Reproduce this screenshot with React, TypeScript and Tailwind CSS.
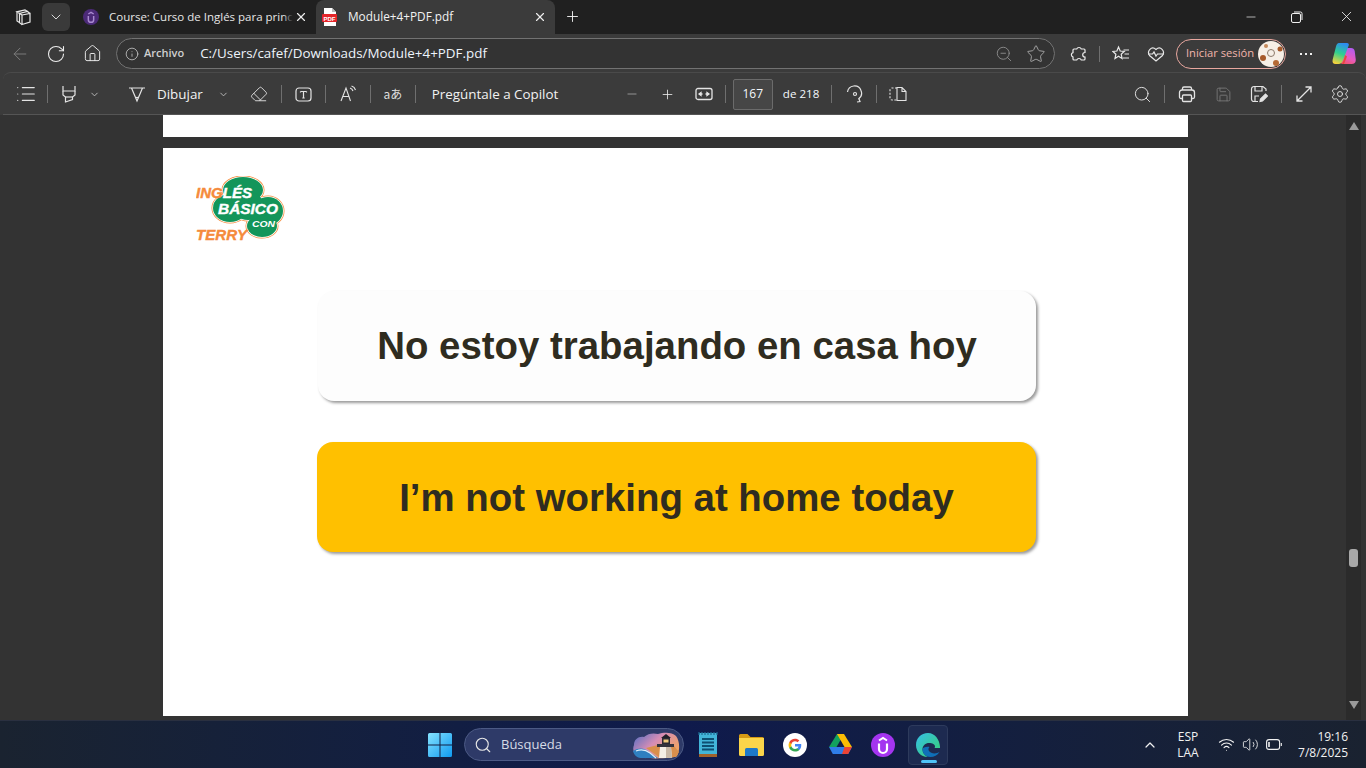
import { ChevronDown, ChevronUp, Minus, Plus, RotateCw, Home, Info, ZoomOut, Star, Search, Save, Settings, X, Eraser, List, ArrowLeft, Wifi, Volume2 } from 'lucide-react';
import type { ReactNode } from 'react';

const Sep = ({ cls = '' }: { cls?: string }) => <div className={`h-[18px] w-px shrink-0 bg-[#6f6f6f] ${cls}`} />;

const Slot = ({ w, children }: { w: string; children: ReactNode }) => (
  <div className={`flex shrink-0 items-center justify-center ${w}`}>{children}</div>
);

function TabsIcon() {
  return (
    <svg width="18" height="18" viewBox="0 0 18 18" fill="none" stroke="#e8e8e8" strokeWidth="1.200">
      <path d="M8 7l8-1.500V14l-8 2.500z" />
      <path d="M8 7L5.500 5.500l8-2L16 5.500" />
      <path d="M8 16.500l-2.500-1.700V5.500" />
      <path d="M5.500 5L3 3.800l8-2 2.500 1.700" />
      <path d="M5.500 14.500L3 13V3.800" />
    </svg>
  );
}

function PdfIcon() {
  return (
    <svg width="16" height="18" viewBox="0 0 16 18">
      <path d="M2 0h8l4 4v14H2z" fill="#fff" />
      <path d="M10 0l4 4h-4z" fill="#bbb" />
      <rect x="0" y="6" width="15" height="8" fill="#e5252a" rx="1" />
      <text x="7.500" y="12.500" textAnchor="middle" fontSize="6" fontWeight="700" fill="#fff" fontFamily="Liberation Sans, sans-serif">PDF</text>
    </svg>
  );
}

function HighlightIcon() {
  return (
    <svg width="18" height="18" viewBox="0 0 18 18" fill="none" stroke="#e4e4e4" strokeWidth="1.200">
      <path d="M3 1v5h12V1" />
      <path d="M3 6v4l2.500 2v5l7-2.500V12l2.500-2V6" />
      <path d="M5.500 12h7" />
    </svg>
  );
}

function PenIcon() {
  return (
    <svg width="18" height="18" viewBox="0 0 18 18" fill="none" stroke="#e4e4e4" strokeWidth="1.200">
      <path d="M1 3h16M3.500 3L9 16l5.500-13" />
      <path d="M7.500 12.500h3" />
    </svg>
  );
}

function TextBoxIcon() {
  return (
    <svg width="17" height="17" viewBox="0 0 17 17" fill="none" stroke="#e4e4e4" strokeWidth="1.200">
      <rect x="1" y="2" width="15" height="13" rx="3" />
      <path d="M5.500 5.500h6M8.500 5.500v6.500M7.300 12h2.400M5.500 5.500v1M11.500 5.500v1" />
    </svg>
  );
}

function ReadAloudIcon() {
  return (
    <svg width="18" height="18" viewBox="0 0 18 18" fill="none" stroke="#e4e4e4" strokeWidth="1.100">
      <path d="M2 16L7 3l4.500 13M3.800 11.500h6" />
      <path d="M11 3c1.500.5 2.500 1.500 3 3M12.500 1c2 .6 3.400 2 4 4" />
    </svg>
  );
}

function FitIcon() {
  return (
    <svg width="18" height="14" viewBox="0 0 18 14" fill="none" stroke="#e4e4e4" strokeWidth="1.300">
      <rect x="1" y="1.500" width="16" height="11" rx="2" />
      <path d="M4 7h3.500M10.500 7H14" />
      <path d="M4 7l2-1.500v3zM14 7l-2-1.500v3z" fill="#e4e4e4" />
    </svg>
  );
}

function RotateIcon() {
  return (
    <svg width="18" height="18" viewBox="0 0 18 18" fill="none" stroke="#e4e4e4" strokeWidth="1.200">
      <path d="M1.500 7A7 7 0 0 1 15 5.500c1.200 3 .3 6.500-2.500 8.500" />
      <circle cx="9" cy="9" r="1.500" />
      <path d="M11 17l3-.5-1.200-3" />
    </svg>
  );
}

function SpreadIcon() {
  return (
    <svg width="18" height="16" viewBox="0 0 18 16" fill="none" stroke="#e4e4e4" strokeWidth="1.100">
      <path d="M8 2H3a2 2 0 0 0-2 2v8a2 2 0 0 0 2 2h5" strokeDasharray="2 1.500" />
      <path d="M8 1.500h5l4 4V14.500H8zM13 1.500v4h4" />
    </svg>
  );
}

function PuzzleIcon() {
  return (
    <svg width="18" height="18" viewBox="0 0 18 18" fill="none" stroke="#ededed" strokeWidth="1.200">
      <path d="M4 4h2.700a2.500 2.500 0 0 1 4.600 0H14a1 1 0 0 1 1 1v2.500a2.300 2.300 0 0 0 0 4.600V14a1 1 0 0 1-1 1h-2.700a2.500 2.500 0 0 0-4.600 0H4a1 1 0 0 1-1-1v-2a2.300 2.300 0 0 1 0-4.400V5a1 1 0 0 1 1-1z" />
    </svg>
  );
}

function FavoritesIcon() {
  return (
    <svg width="18" height="18" viewBox="0 0 18 18" fill="none" stroke="#e8e8e8" strokeWidth="1.200">
      <path d="M6.500 2l1.700 4 4 .4-3 2.800.900 4.300-3.600-2.200L3 13.500l.9-4.300-3-2.800 4-.4z" />
      <path d="M11.500 5H17M12.500 9H17M11 13h6" />
    </svg>
  );
}

function HeartbeatIcon() {
  return (
    <svg width="18" height="16" viewBox="0 0 18 16" fill="none" stroke="#e8e8e8" strokeWidth="1.200">
      <path d="M2.500 9.500C-.5 5 4.500-.5 9 3.500c4.500-4 9.500 1.500 6.500 6L9 15z" />
      <path d="M1 8h4.500l1.500-2 2 4 1.500-2h6.500" />
    </svg>
  );
}

function PrintIcon() {
  return (
    <svg width="18" height="18" viewBox="0 0 18 18" fill="none" stroke="#e4e4e4" strokeWidth="1.300">
      <path d="M4.500 5V3.500a1.500 1.500 0 0 1 1.500-1.500h6a1.500 1.500 0 0 1 1.500 1.500V5" />
      <path d="M4.500 13.500H3A1.500 1.500 0 0 1 1.500 12V7.500A2.500 2.500 0 0 1 4 5h10a2.500 2.500 0 0 1 2.500 2.500V12a1.500 1.500 0 0 1-1.500 1.500h-1.500" />
      <rect x="4.500" y="10" width="9" height="6.500" rx="1" />
    </svg>
  );
}

function SaveAsIcon() {
  return (
    <svg width="18" height="18" viewBox="0 0 18 18" fill="none" stroke="#e4e4e4" strokeWidth="1.200">
      <path d="M8 16.500H4a2.500 2.500 0 0 1-2.500-2.500V4A2.500 2.500 0 0 1 4 1.500h9L16 4v2" />
      <path d="M5 2v4h7V2M5 16v-5h4" />
      <path d="M10 16.500l.5-2.500 5-5 2 2-5 5z" fill="#e4e4e4" />
    </svg>
  );
}

function ExpandIcon() {
  return (
    <svg width="18" height="18" viewBox="0 0 18 18" fill="none" stroke="#e4e4e4" strokeWidth="1.300">
      <path d="M10.500 2H16v5.500M16 2L2 16M2 10.500V16h5.500" />
    </svg>
  );
}

function Avatar() {
  return (
    <svg width="26" height="26" viewBox="0 0 26 26">
      <circle cx="13" cy="13" r="13" fill="#f6efe6" />
      <circle cx="5" cy="17" r="3" fill="#a65a2a" />
      <circle cx="18" cy="22" r="3" fill="#b56a35" />
      <circle cx="22" cy="8" r="2.500" fill="#a65a2a" />
      <circle cx="8" cy="5" r="2" fill="#c58a5c" />
      <circle cx="13" cy="12" r="3.500" fill="none" stroke="#8c7a6a" strokeWidth="1" />
    </svg>
  );
}

function CopilotIcon() {
  return (
    <svg width="24" height="24" viewBox="0 0 24 24">
      <defs>
        <linearGradient id="cpa" x1="0.600" y1="0" x2="0.300" y2="1">
          <stop offset="0" stopColor="#2d8cf0" />
          <stop offset="0.500" stopColor="#2fd08f" />
          <stop offset="1" stopColor="#f6d23c" />
        </linearGradient>
        <linearGradient id="cpb" x1="0.700" y1="0" x2="0.300" y2="1">
          <stop offset="0" stopColor="#b25cf0" />
          <stop offset="0.600" stopColor="#e85bc0" />
          <stop offset="1" stopColor="#f0566f" />
        </linearGradient>
      </defs>
      <path d="M15 6h4c2 0 3.300 1 3.700 3l1 8c.4 3-1 5-4 5h-9c-1.500 0-2-1-1.300-2.500z" fill="url(#cpb)" />
      <path d="M7 1h8c1.500 0 2.200 1 1.700 2.500L11.500 17c-1 3-2.500 5-5 5H3.500C1 22 0 20 .7 17.500L4 4.500C4.500 2.500 5.500 1 7 1z" fill="url(#cpa)" />
      <path d="M13 13l2 1.500-3 7.500h-2c1-1.500 2-5 3-9z" fill="#e8483f" />
    </svg>
  );
}

const CLOVER = [
  { cx: 47, cy: 14, rx: 20, ry: 13 },
  { cx: 34, cy: 32, rx: 17, ry: 14 },
  { cx: 72, cy: 35, rx: 15, ry: 14 },
  { cx: 66, cy: 50, rx: 15, ry: 11 },
  { cx: 52, cy: 30, rx: 16, ry: 14 },
];

function IngLogo() {
  const type = { fontFamily: 'Liberation Sans, sans-serif', fontWeight: 700, fontStyle: 'italic' } as const;
  return (
    <svg width="90" height="68" viewBox="0 0 90 68" className="block">
      <g fill="#f58b3c" stroke="#f58b3c" strokeWidth="3">
        {CLOVER.map((c, i) => <ellipse key={i} {...c} />)}
      </g>
      <g fill="#fff" stroke="#fff" strokeWidth="1.500">
        {CLOVER.map((c, i) => <ellipse key={i} {...c} />)}
      </g>
      <g fill="#13955a">
        {CLOVER.map((c, i) => <ellipse key={i} {...c} />)}
      </g>
      <text x="0" y="22" fontSize="14.500" strokeWidth="0.400" textLength="56" lengthAdjust="spacingAndGlyphs" style={type}>
        <tspan fill="#f58b3c" stroke="#f58b3c">ING</tspan>
        <tspan fill="#fff" stroke="#fff">LÉS</tspan>
      </text>
      <text x="22" y="38" fontSize="15.500" fill="#fff" stroke="#fff" strokeWidth="0.400" textLength="60" lengthAdjust="spacingAndGlyphs" style={type}>BÁSICO</text>
      <text x="56" y="51" fontSize="9.500" fill="#fff" textLength="23" lengthAdjust="spacingAndGlyphs" style={type}>CON</text>
      <text x="0" y="64" fontSize="14.500" fill="#f58b3c" stroke="#f58b3c" strokeWidth="0.400" textLength="51" lengthAdjust="spacingAndGlyphs" style={type}>TERRY</text>
    </svg>
  );
}

function WindowsLogo() {
  return (
    <svg width="24" height="24" viewBox="0 0 24 24">
      <defs>
        <linearGradient id="wl" x1="0" y1="0" x2="1" y2="1">
          <stop offset="0" stopColor="#86e3ff" />
          <stop offset="1" stopColor="#0f9af0" />
        </linearGradient>
      </defs>
      <path d="M0 1.500A1.500 1.500 0 0 1 1.500 0h10v11.500H0zM12.500 0h10A1.500 1.500 0 0 1 24 1.500v10H12.500zM0 12.500h11.500V24h-10A1.500 1.500 0 0 1 0 22.500zM12.500 12.500H24v10a1.500 1.500 0 0 1-1.500 1.500h-10z" fill="url(#wl)" />
    </svg>
  );
}

function Lighthouse() {
  return (
    <svg width="48" height="28" viewBox="0 0 48 28">
      <defs>
        <linearGradient id="sky" x1="0" y1="0" x2="1" y2="0.600">
          <stop offset="0" stopColor="#4c6cc4" />
          <stop offset="0.500" stopColor="#d68db5" />
          <stop offset="1" stopColor="#f0a463" />
        </linearGradient>
      </defs>
      <path d="M1 14C1 8 6 5 11 6c4-4 10-4 14-3 6-2 14-2 18 2 4 5 4 15 1 20-3 3-34 3-38 1-5-2-7-8-5-12z" fill="url(#sky)" />
      <path d="M0 20c6-4 12-3 16 1l9 6H8c-4 0-7-3-8-7z" fill="#2f7fc0" />
      <path d="M3 20c5-2 10-1 14 2l6 5" fill="none" stroke="#dfeff8" strokeWidth="1.200" />
      <path d="M13 17l12-3 16 1 5 6-3 5H26z" fill="#d98f4c" />
      <path d="M27 16h11l1 11H26z" fill="#f4efe6" />
      <path d="M33 16h5l1 11h-6z" fill="#c9b9a8" />
      <path d="M24 13h17v3H24z" fill="#33333d" />
      <path d="M29 7h8v6h-8z" fill="#2a2a34" />
      <path d="M30.500 8.500h5v3h-5z" fill="#f0c97a" />
      <path d="M33 3l5 4H28z" fill="#1f1f28" />
    </svg>
  );
}

function NotepadIcon() {
  return (
    <svg width="20" height="26" viewBox="0 0 20 26">
      <rect x="1" y="1" width="18" height="24" rx="1" fill="#42b4d8" />
      <rect x="1" y="22" width="18" height="3" fill="#a0612a" />
      <path d="M1 0v3M4 0v3M7 0v3M10 0v3M13 0v3M16 0v3M19 0v3" stroke="#1e6d94" strokeWidth="1.200" />
      <path d="M4 7h12M4 10.500h12M4 14h12M4 17.500h12" stroke="#0d4f72" strokeWidth="1.800" />
    </svg>
  );
}

function FolderIcon() {
  return (
    <svg width="25" height="22" viewBox="0 0 25 22">
      <path d="M0 1.500A1.500 1.500 0 0 1 1.500 0h7l3 3h12A1.500 1.500 0 0 1 25 4.500V8H0z" fill="#d69a14" />
      <path d="M0 4h25v16.500a1.500 1.500 0 0 1-1.500 1.500h-22A1.500 1.500 0 0 1 0 20.500z" fill="#fbd54a" />
      <path d="M6 15.500a1.500 1.500 0 0 1 1.500-1.500h10a1.500 1.500 0 0 1 1.500 1.500V22H6z" fill="#1d78c9" />
    </svg>
  );
}

function GoogleIcon() {
  return (
    <svg width="24" height="24" viewBox="0 0 48 48">
      <circle cx="24" cy="24" r="24" fill="#fff" />
      <path d="M36.500 24.700c0-.9-.1-1.700-.2-2.500H24v4.800h7c-.3 1.600-1.200 3-2.600 3.900v3.200h4.200c2.500-2.300 3.900-5.600 3.900-9.400z" fill="#4285f4" />
      <path d="M24 37c3.500 0 6.500-1.200 8.600-3.100l-4.200-3.200c-1.200.8-2.600 1.300-4.400 1.300-3.400 0-6.200-2.300-7.200-5.300h-4.300v3.300C14.600 34.200 19 37 24 37z" fill="#34a853" />
      <path d="M16.800 26.700c-.5-1.600-.5-3.300 0-4.900v-3.300h-4.300c-1.800 3.500-1.800 7.900 0 11.500z" fill="#fbbc05" />
      <path d="M24 16.500c1.900 0 3.600.7 5 2l3.700-3.700C30.400 12.700 27.400 11.500 24 11.500c-5 0-9.400 2.800-11.500 7l4.300 3.300c1-3 3.800-5.300 7.200-5.300z" fill="#ea4335" />
    </svg>
  );
}

function DriveIcon() {
  return (
    <svg width="23" height="21" viewBox="0 0 23 21">
      <path d="M8 0h7l-7.500 13H0z" fill="#12a15e" />
      <path d="M15 0l8 13h-7.500L8 0z" fill="#fbbc04" />
      <path d="M0 13l3.800 7h15.400L23 13z" fill="#2f7de8" />
      <path d="M19.200 20L23 13h-7.500l-2.500 7z" fill="#ea4335" />
    </svg>
  );
}

function UdemyIcon({ size = 24, bg = '#a435f0', fg = '#fff' }: { size?: number; bg?: string; fg?: string }) {
  return (
    <svg width={size} height={size} viewBox="0 0 24 24" className="shrink-0">
      <circle cx="12" cy="12" r="12" fill={bg} />
      <path d="M8 10.500v5.500a4 4 0 0 0 8 0v-5.500" fill="none" stroke={fg} strokeWidth="2.200" />
      <path d="M8 7.500l4-2.500 4 2.500" fill="none" stroke={fg} strokeWidth="2" />
    </svg>
  );
}

function EdgeIcon() {
  return (
    <svg width="24" height="24" viewBox="0 0 24 24">
      <defs>
        <linearGradient id="ed" x1="0" y1="0" x2="1" y2="1">
          <stop offset="0" stopColor="#36c0e8" />
          <stop offset="1" stopColor="#37d06f" />
        </linearGradient>
      </defs>
      <path d="M12 0C5 0 0 5 0 12c0 6.500 5 12 11.500 12-3-1.500-5-4.500-5-7.500 0-4 3-6.500 6.500-6.500s6 1.500 6 3.500c0 .5 0 1-.5 1.500H24c.3-7-4.500-15-12-15z" fill="url(#ed)" />
      <path d="M6.500 16.500c0 4 3.500 7.500 8 7.500 3.500 0 7-1.500 9-5-3 2-8.500 2-10.500-1-1-1.500-.5-3 .5-4-3.500-.5-7 .5-7 2.500z" fill="#0f6fb8" />
    </svg>
  );
}

function BatteryIcon() {
  return (
    <svg width="16" height="11" viewBox="0 0 16 11" fill="none" stroke="#f2f2f2" strokeWidth="1.100">
      <rect x="0.600" y="0.600" width="13" height="9.800" rx="2.500" />
      <path d="M15.300 4v3" />
      <path d="M3 3v5" strokeWidth="1.600" />
    </svg>
  );
}

export default function App() {
  return (
    <div className="flex h-[768px] w-[1366px] flex-col overflow-hidden bg-[#202020] font-['Open_Sans','Noto_Sans',sans-serif] text-[13px] text-[#f2f2f2]">
      {/* pestañas */}
      <div className="flex h-[34px] shrink-0 items-center pb-[1px] pl-[14px]">
        <TabsIcon />
        <div className="ml-[10px] flex h-[28px] w-[28px] items-center justify-center rounded-md bg-[#3a3a3a]">
          <ChevronDown size={16} color="#e4e4e4" strokeWidth={1.400} />
        </div>
        <div className="ml-[13px] flex w-[235px] items-center">
          <UdemyIcon size={16} bg="#4c2a78" fg="#a98ad0" />
          <div className="relative ml-[10px]">
            <span className="whitespace-nowrap text-[11.5px] text-[#e6e6e6]">Course: Curso de Inglés para princ</span>
            <div className="absolute inset-y-0 right-0 w-[10px] bg-gradient-to-r from-transparent to-[#202020]" />
          </div>
          <X size={14} color="#ededed" className="ml-auto mr-[10px] shrink-0" />
        </div>
        <div className="-mb-[1px] -ml-[2px] flex h-[34px] w-[239px] items-center self-end rounded-t-[8px] bg-[#3b3b3b] pb-[1px] pl-[6px]">
          <PdfIcon />
          <span className="ml-[10px] text-[11.8px] text-[#f2f2f2]">Module+4+PDF.pdf</span>
          <X size={14} color="#ededed" className="ml-auto mr-[8px]" />
        </div>
        <Plus size={17} color="#f2f2f2" strokeWidth={1.300} className="ml-[9px]" />
        <div className="ml-auto flex items-center pr-[11px]">
          <Minus size={14} color="#f0f0f0" strokeWidth={1.200} className="mr-[33px]" />
          <svg width="12" height="12" viewBox="0 0 12 12" fill="none" stroke="#f0f0f0" strokeWidth="1" className="mr-[35px]">
            <rect x="0.500" y="2.500" width="9" height="9" rx="1.500" />
            <path d="M3 1h6.500A1.500 1.500 0 0 1 11 2.500V9" />
          </svg>
          <X size={17} color="#f0f0f0" strokeWidth={1.200} />
        </div>
      </div>

      {/* barra de direcciones */}
      <div className="flex h-[38px] shrink-0 items-center bg-[#3b3b3b] pl-[10px] pt-[1px]">
        <ArrowLeft size={20} color="#7b7b7b" strokeWidth={1.200} />
        <RotateCw size={20} color="#ededed" strokeWidth={1.300} className="ml-[16px]" />
        <Home size={19} color="#ededed" strokeWidth={1.200} className="ml-[17px]" />
        <div className="ml-[14px] flex h-[31px] w-[939px] items-center rounded-full border border-[#727272] bg-[#333333] pl-[8px]">
          <Info size={14} color="#cfcfcf" strokeWidth={1.300} />
          <span className="ml-[5px] text-[11px] font-semibold text-[#d0d0d0]">Archivo</span>
          <span className="ml-[16px] text-[13.4px] text-[#eef4fb]">C:/Users/cafef/Downloads/Module+4+PDF.pdf</span>
          <ZoomOut size={18} color="#8f8f8f" strokeWidth={1.200} className="ml-auto" />
          <Star size={20} color="#a0a0a0" strokeWidth={1.200} className="ml-[13px] mr-[8px]" />
        </div>
        <div className="ml-[15px]"><PuzzleIcon /></div>
        <Sep cls="ml-[11px] !h-[16px]" />
        <div className="ml-[12px]"><FavoritesIcon /></div>
        <div className="ml-[17px]"><HeartbeatIcon /></div>
        <div className="ml-[11px] flex h-[30px] w-[110px] items-center justify-between rounded-full border border-[#e8a79f] pl-[9px] pr-[1px]">
          <span className="whitespace-nowrap text-[11.2px] text-[#f1b5ac]">Iniciar sesión</span>
          <Avatar />
        </div>
        <div className="ml-[14px] flex gap-[3px]">
          <span className="h-[2px] w-[2px] bg-[#f0f0f0]" />
          <span className="h-[2px] w-[2px] bg-[#f0f0f0]" />
          <span className="h-[2px] w-[2px] bg-[#f0f0f0]" />
        </div>
        <div className="ml-[20px]"><CopilotIcon /></div>
      </div>

      {/* barra del visor PDF */}
      <div className="flex h-[43px] shrink-0 bg-[#3b3b3b]">
        <div className="ml-[3px] flex h-[43px] flex-1 items-center rounded-t-[8px] border-y border-t-[#4a4a4a] border-b-[#555555] bg-[#3b3b3b] pl-[12px] pt-[1px]">
          <List size={22} color="#e4e4e4" strokeWidth={1.200} />
          <Sep cls="ml-[10px]" />
          <div className="ml-[12px]"><HighlightIcon /></div>
          <ChevronDown size={11} color="#bdbdbd" className="ml-[11px]" />
          <div className="ml-[28px]"><PenIcon /></div>
          <span className="ml-[11px] text-[13.4px]">Dibujar</span>
          <ChevronDown size={11} color="#bdbdbd" className="ml-[15px]" />
          <Eraser size={18} color="#e4e4e4" strokeWidth={1.200} className="ml-[21px]" />
          <Sep cls="ml-[13px]" />
          <div className="ml-[13px]"><TextBoxIcon /></div>
          <Sep cls="ml-[13px]" />
          <div className="ml-[13px]"><ReadAloudIcon /></div>
          <Sep cls="ml-[13px]" />
          <Slot w="w-[44px]"><span className="font-['Noto_Sans_CJK_JP','Open_Sans',sans-serif] text-[12px] text-[#dedede]">aあ</span></Slot>
          <Sep />
          <span className="ml-[16px] w-[127px] whitespace-nowrap text-[13.4px]">Pregúntale a Copilot</span>
          <Minus size={14} color="#a5a5a5" strokeWidth={1.400} className="ml-[66px]" />
          <Plus size={15} color="#ededed" strokeWidth={1.300} className="ml-[21px]" />
          <div className="ml-[20px]"><FitIcon /></div>
          <Sep cls="ml-[12px]" />
          <div className="ml-[7px] flex h-[31px] w-[40px] items-center justify-center rounded-[2px] border border-[#6b6b6b] bg-[#464646] text-[12px] text-[#f4f8fc]">167</div>
          <span className="ml-[10px] w-[38px] whitespace-nowrap text-[11.6px] text-[#f4f8fc]">de 218</span>
          <Sep cls="ml-[10px]" />
          <div className="ml-[14px]"><RotateIcon /></div>
          <Sep cls="ml-[12px]" />
          <div className="ml-[12px]"><SpreadIcon /></div>
          <Search size={19} color="#e4e4e4" strokeWidth={1.200} className="ml-[226px]" />
          <Sep cls="ml-[12px]" />
          <div className="ml-[13px]"><PrintIcon /></div>
          <Save size={17} color="#777777" strokeWidth={1.300} className="ml-[19px]" />
          <div className="ml-[18px]"><SaveAsIcon /></div>
          <Sep cls="ml-[13px]" />
          <div className="ml-[13px]"><ExpandIcon /></div>
          <Settings size={20} color="#e4e4e4" strokeWidth={1.100} className="ml-[17px]" />
        </div>
      </div>

      {/* documento */}
      <div className="flex min-h-0 flex-1 bg-[#333333]">
        <div className="flex-1 overflow-hidden pl-[163px]">
          <div className="h-[22px] w-[1025px] bg-white" />
          <div className="mt-[11px] h-[568px] w-[1025px] bg-white pl-[33px] pt-[28px]">
            <IngLogo />
            <div className="ml-[122px] mt-[47px] flex h-[110px] w-[718px] items-center justify-center rounded-[16px] bg-[#fdfdfd] shadow-[2px_2px_3px_rgba(0,0,0,0.4)]">
              <span className="font-['Liberation_Sans',sans-serif] text-[38.4px] font-bold text-[#2f2c20]">No estoy trabajando en casa hoy</span>
            </div>
            <div className="ml-[121px] mt-[41px] flex h-[110px] w-[719px] items-center justify-center rounded-[16px] bg-[#ffc000] pt-[2px] shadow-[2px_2px_3px_rgba(0,0,0,0.4)]">
              <span className="font-['Liberation_Sans',sans-serif] text-[38.4px] font-bold text-[#2f2c20]">I’m not working at home today</span>
            </div>
          </div>
        </div>
        <div className="mr-[5px] flex w-[15px] shrink-0 flex-col items-center bg-[#2b2b2b] pt-[7px]">
          <div className="h-0 w-0 border-x-[5px] border-b-[8px] border-x-transparent border-b-[#9a9a9a]" />
          <div className="mt-[419px] h-[18px] w-[9px] rounded-[3px] bg-[#a8a8a8]" />
          <div className="mt-[134px] h-0 w-0 border-x-[5px] border-t-[8px] border-x-transparent border-t-[#9a9a9a]" />
        </div>
      </div>

      {/* barra de tareas */}
      <div className="flex h-[48px] shrink-0 items-center border-t border-[#2a3040] bg-gradient-to-r from-[#1a2330] via-[#0f1a4c] to-[#1a2230] pl-[428px]">
        <WindowsLogo />
        <div className="ml-[12px] flex h-[33px] w-[220px] items-center rounded-full border border-[#4c5a85] bg-[#2e3a68] pl-[9px]">
          <Search size={18} color="#e6e6e6" strokeWidth={1.500} />
          <span className="ml-[9px] text-[13px] text-[#d7dbe6]">Búsqueda</span>
          <div className="ml-auto mr-[2px] flex"><Lighthouse /></div>
        </div>
        <div className="ml-[14px]"><NotepadIcon /></div>
        <div className="ml-[21px]"><FolderIcon /></div>
        <div className="ml-[19px]"><GoogleIcon /></div>
        <div className="ml-[22px]"><DriveIcon /></div>
        <div className="ml-[19px]"><UdemyIcon /></div>
        <div className="relative ml-[13px] flex h-[40px] w-[40px] items-center justify-center rounded-[4px] border border-[#2d3a5c] bg-[#1d2a50]">
          <EdgeIcon />
          <div className="absolute bottom-[1px] left-[12px] h-[3px] w-[16px] rounded-full bg-[#4fc3f7]" />
        </div>
        <ChevronUp size={16} color="#f2f2f2" strokeWidth={1.800} className="ml-[194px]" />
        <div className="ml-[18px] flex w-[24px] flex-col items-center text-[12px] leading-[16px] text-[#f2f2f2]">
          <span>ESP</span>
          <span>LAA</span>
        </div>
        <Wifi size={17} color="#f2f2f2" strokeWidth={1.500} className="ml-[18px]" />
        <Volume2 size={17} color="#f2f2f2" strokeWidth={1.200} className="ml-[7px]" />
        <div className="ml-[7px]"><BatteryIcon /></div>
        <div className="ml-[14px] flex w-[52px] flex-col items-end text-[12px] leading-[16px] text-[#f2f2f2]">
          <span>19:16</span>
          <span>7/8/2025</span>
        </div>
      </div>
    </div>
  );
}
